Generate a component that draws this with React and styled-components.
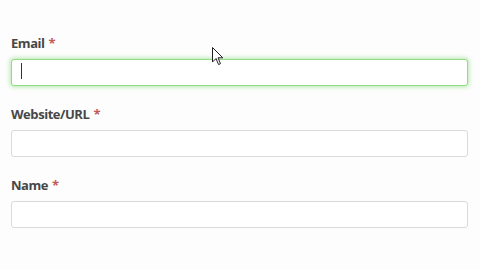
import React from "react";
import styled, { createGlobalStyle, css } from "styled-components";

const Global = createGlobalStyle`
  html, body { margin: 0; padding: 0; background: #fdfdfd; }
  body { font-family: "Open Sans", "Liberation Sans", sans-serif; }
`;

const Page = styled.div`
  position: relative;
  width: 480px;
  height: 270px;
  box-sizing: border-box;
  padding: 34px 12px 0 11px;
  display: flex;
  flex-direction: column;
  gap: 19px;
`;

const Field = styled.div`
  display: flex;
  flex-direction: column;
  gap: 7px;
`;

const Label = styled.label`
  font-size: 13px;
  line-height: 18px;
  font-weight: 700;
  color: #474747;
  letter-spacing: -0.45px;
`;

const Req = styled.span`
  color: #c25a58;
  margin-left: 4px;
  font-weight: 700;
`;

const InputBox = styled.div`
  position: relative;
  height: 27px;
  box-sizing: border-box;
  border: 1px solid #dadada;
  border-radius: 3px;
  background: #fff;
  ${(p) =>
    p.$focused &&
    css`
      border-color: #92dc86;
      box-shadow: 0 0 4px 1px rgba(120, 215, 105, 0.55);
    `}
`;

const Caret = styled.span`
  position: absolute;
  left: 9px;
  top: 3px;
  width: 1px;
  height: 16px;
  background: #333;
`;

const Pointer = styled.svg`
  position: absolute;
  left: 212px;
  top: 47px;
`;

export default function App() {
  return (
    <>
      <Global />
      <Page>
        <Field>
          <Label>
            Email<Req>*</Req>
          </Label>
          <InputBox $focused>
            <Caret />
          </InputBox>
        </Field>
        <Field>
          <Label>
            Website/URL<Req>*</Req>
          </Label>
          <InputBox />
        </Field>
        <Field>
          <Label>
            Name<Req>*</Req>
          </Label>
          <InputBox />
        </Field>
        <Pointer width="12" height="19" viewBox="0 0 12 19">
          <path
            d="M0.5 0.5 L0.5 15 L4 11.5 L6.5 17.5 L8.5 16.7 L6 10.8 L10.8 10.8 Z"
            fill="#fff"
            stroke="#222"
            strokeWidth="1"
            strokeLinejoin="miter"
          />
        </Pointer>
      </Page>
    </>
  );
}
